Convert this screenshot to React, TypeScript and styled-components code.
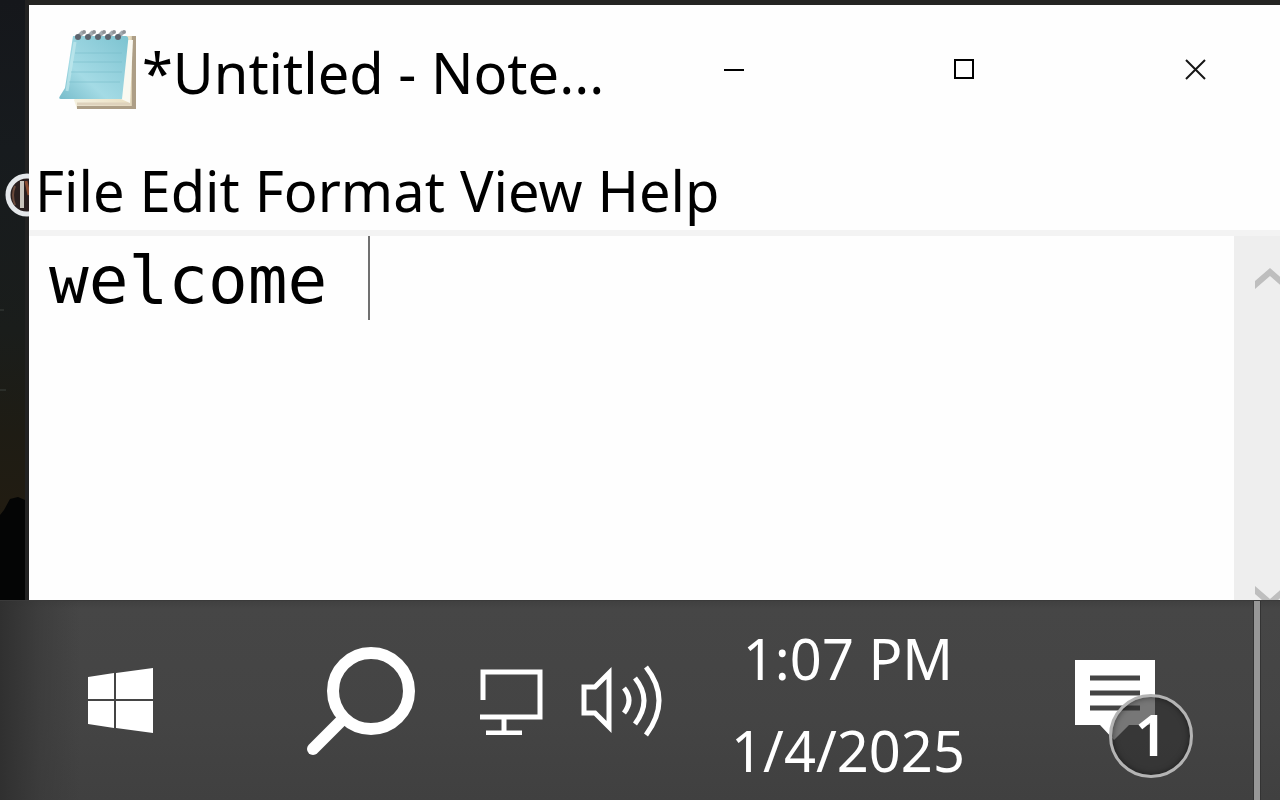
import React from 'react';
import styled, { createGlobalStyle } from 'styled-components';

const GlobalStyle = createGlobalStyle`
  *, *::before, *::after { box-sizing: border-box; }
  body {
    margin: 0;
    overflow: hidden;
    background: #1c1c1c;
    font-family: "Noto Sans", "Open Sans", sans-serif;
  }
  button {
    font: inherit;
    color: inherit;
    border: 0;
    padding: 0;
    background: none;
  }
  svg { display: block; }
`;

const Screen = styled.div`
  display: flex;
  flex-direction: column;
  height: 100vh;
  overflow: hidden;
`;

const Desktop = styled.main`
  flex: 1;
  min-height: 0;
  display: flex;
  overflow: hidden;
  padding-top: 5px;
  background: #242422;
`;

const Wallpaper = styled.div`
  flex: none;
  width: 29px;
  margin-top: -5px;
  border-right: 4px solid #222222;
  background: linear-gradient(#15171b 0%, #171b1e 25%, #1a1d1b 55%, #1e1c14 72%, #211c12 84%, #1c1810 100%);
  svg { overflow: visible; }
`;

const Window = styled.section`
  flex: 1;
  min-width: 0;
  display: flex;
  flex-direction: column;
  margin: 0 -30px -12px 0;
  background: #fefefe;
  color: #000;
  z-index: 1;
`;

const TitleBar = styled.header`
  display: flex;
  align-items: center;
  height: 130px;
  padding-left: 28px;
`;

const Title = styled.h1`
  flex: 1;
  min-width: 0;
  margin: 0;
  padding: 4px 0 0 3px;
  font-size: 56px;
  line-height: 80px;
  font-weight: 400;
  white-space: nowrap;
`;

const CaptionButton = styled.button`
  flex: none;
  display: grid;
  place-items: center;
  width: 230px;
  height: 130px;
`;

const MenuBar = styled.nav`
  display: flex;
  gap: 15px;
  height: 101px;
  padding: 14px 0 0 6px;
  border-bottom: 6px solid #f3f3f3;
`;

const MenuItem = styled.button`
  font-size: 56px;
  line-height: 80px;
`;

const Body = styled.div`
  flex: 1;
  min-height: 0;
  display: flex;
`;

const Editor = styled.div`
  position: relative;
  flex: 1;
  min-width: 0;
  display: flex;
  font: 66px/84px "DejaVu Sans Mono", monospace;
`;

const TextArea = styled.textarea`
  flex: 1;
  min-width: 0;
  border: 0;
  outline: 0;
  resize: none;
  overflow: hidden;
  padding: 3px 20px 0;
  font: inherit;
  color: #000;
  background: #fefefe;
`;

const Caret = styled.span`
  position: absolute;
  top: 0;
  left: calc(21px + 8ch);
  width: 2px;
  height: 84px;
  background: #707070;
`;

const ScrollBar = styled.div`
  flex: none;
  display: flex;
  flex-direction: column;
  justify-content: space-between;
  width: 76px;
  background: #eeeeee;
`;

const ScrollButton = styled.button<{ $end?: boolean }>`
  display: flex;
  justify-content: center;
  align-items: ${(p) => (p.$end ? 'flex-end' : 'center')};
  height: 84px;
  padding: 0 4px ${(p) => (p.$end ? 4 : 0)}px 0;
`;

const Taskbar = styled.footer`
  flex: none;
  display: flex;
  align-items: center;
  height: 200px;
  color: #fff;
  border-top: 1px solid #3a3a3a;
  background:
    linear-gradient(90deg, #303030 0, rgba(56, 56, 56, 0.6) 40px, transparent 80px),
    linear-gradient(#404040 0, #464646 8px, #444444 60%, #404040 100%);
`;

const TaskButton = styled.button<{ $width: number }>`
  flex: none;
  display: grid;
  place-items: center;
  width: ${(p) => p.$width}px;
  height: 199px;
`;

const Clock = styled.button`
  flex: 1;
  min-width: 0;
  padding-top: 6px;
  font-size: 56px;
  line-height: 92px;
  text-align: center;
  white-space: nowrap;
  span { display: block; }
`;

const Notifications = styled(TaskButton)`
  position: relative;
  padding-right: 20px;
`;

const Badge = styled.span`
  position: absolute;
  right: 61px;
  top: 93px;
  width: 84px;
  height: 84px;
  border: 3px solid #b4b4b4;
  border-radius: 50%;
  background: rgba(48, 48, 48, 0.66);
  box-shadow: inset 0 0 6px rgba(0, 0, 0, 0.5);
  font-size: 58px;
  line-height: 74px;
  font-weight: 600;
  text-align: center;
`;

const ShowDesktop = styled.button`
  flex: none;
  width: 26px;
  height: 199px;
  border-left: 6px solid #979797;
  box-shadow: -1px 0 0 #333, inset 1px 0 0 #333;
`;

const NotepadIcon = () => (
  <svg width="82" height="84" viewBox="0 0 82 84" aria-hidden="true">
    <defs>
      <linearGradient id="cover" x1="0" y1="1" x2="1" y2="0">
        <stop offset="0" stopColor="#77bccb" />
        <stop offset=".35" stopColor="#a4dbe5" />
        <stop offset=".65" stopColor="#93d0dc" />
        <stop offset="1" stopColor="#7cc3d0" />
      </linearGradient>
      <linearGradient id="edge" x1="0" y1="0" x2="1" y2="0">
        <stop offset="0" stopColor="#f5f1df" />
        <stop offset=".9" stopColor="#eadfc2" />
        <stop offset="1" stopColor="#a99a80" />
      </linearGradient>
    </defs>
    <path d="M66 8H79V81H20L17 72Z" fill="url(#edge)" />
    <path d="M20 78H75V8H79V81H20Z" fill="#ad9e86" />
    <path d="M20 76H73" stroke="#ded2bc" strokeWidth="3" />
    <path d="M70 12L64 71 73 75 76 12Z" fill="#faf9f1" />
    <path d="M16 8H69Q72 8 71 14L65 71H4Q1 71 3 68L8 60Z" fill="url(#cover)" />
    <path d="M18 14L10 63" stroke="#c9edf0" strokeWidth="3" opacity=".6" />
    <path d="M18 25H65M16 34H65M14 44H65M12 54H63" stroke="#78bdca" strokeWidth="1" opacity=".6" />
    {[0, 1, 2, 3, 4].map((i) => (
      <g key={i}>
        <path d={`M${21 + i * 10} 9L${26 + i * 10} 4`} stroke="#a3abb1" strokeWidth="4" />
        <circle cx={21 + i * 10} cy="9" r="3" fill="#5d646e" />
        <circle cx={27 + i * 10} cy="4" r="2" fill="#8f9398" />
      </g>
    ))}
  </svg>
);

const Chevron = ({ down = false }: { down?: boolean }) => (
  <svg width="32" height="22" viewBox="0 0 32 22" aria-hidden="true">
    <path d={down ? 'M1 0L16 13 31 0V8L16 21 1 8Z' : 'M1 14L16 1 31 14V22L16 9 1 22Z'} fill="#bebebe" />
  </svg>
);

export default function App() {
  return (
    <Screen>
      <GlobalStyle />
      <Desktop>
        <Wallpaper>
          <svg width="25" height="600" viewBox="0 0 25 600" aria-hidden="true">
            <circle cx="27" cy="195" r="19" fill="#2a2020" stroke="#e4e7ea" strokeWidth="5" />
            <path d="M15 186Q11 195 15 205" fill="none" stroke="#6b4a3c" strokeWidth="2" />
            <path d="M22 181V208" stroke="#c9c5bd" strokeWidth="4" />
            <path d="M26 181L29 195" stroke="#8b4d32" strokeWidth="3" />
            <path d="M0 515L4 510 10 499 18 497 25 500V600H0Z" fill="#040505" />
            <path d="M0 310H4M0 390H6" stroke="#3a403c" strokeWidth="1" />
          </svg>
        </Wallpaper>
        <Window aria-label="Notepad">
          <TitleBar>
            <NotepadIcon />
            <Title>*Untitled - Note...</Title>
            <CaptionButton aria-label="Minimize">
              <svg width="22" height="22" viewBox="0 0 22 22">
                <path d="M0 11H20" stroke="#000" strokeWidth="2" />
              </svg>
            </CaptionButton>
            <CaptionButton aria-label="Maximize">
              <svg width="22" height="22" viewBox="0 0 22 22">
                <path d="M1 1H19V19H1Z" fill="none" stroke="#000" strokeWidth="2" />
              </svg>
            </CaptionButton>
            <CaptionButton aria-label="Close">
              <svg width="22" height="22" viewBox="0 0 22 22">
                <path d="M2 1L21 20M21 1L2 20" stroke="#161616" strokeWidth="2" />
              </svg>
            </CaptionButton>
          </TitleBar>
          <MenuBar aria-label="Menu">
            {['File', 'Edit', 'Format', 'View', 'Help'].map((name) => (
              <MenuItem key={name}>{name}</MenuItem>
            ))}
          </MenuBar>
          <Body>
            <Editor>
              <TextArea aria-label="Document text" defaultValue="welcome " spellCheck={false} />
              <Caret />
            </Editor>
            <ScrollBar>
              <ScrollButton aria-label="Scroll up"><Chevron /></ScrollButton>
              <ScrollButton $end aria-label="Scroll down"><Chevron down /></ScrollButton>
            </ScrollBar>
          </Body>
        </Window>
      </Desktop>
      <Taskbar>
        <TaskButton $width={240} aria-label="Start">
          <svg width="66" height="66" viewBox="0 0 66 66">
            <path d="M1 9L27 5V31H1ZM29 5L66 0V31H29ZM1 33H27V60L1 56ZM29 33H66V65L29 60Z" fill="#fff" />
          </svg>
        </TaskButton>
        <TaskButton $width={240} aria-label="Search">
          <svg width="110" height="110" viewBox="0 0 110 110">
            <circle cx="66" cy="45" r="38" fill="none" stroke="#fff" strokeWidth="12" />
            <path d="M38 73L8 103" stroke="#fff" strokeWidth="12" strokeLinecap="round" />
          </svg>
        </TaskButton>
        <TaskButton $width={64} aria-label="Network">
          <svg width="64" height="68" viewBox="0 0 64 68">
            <path d="M3 33V5H60V50H0M24 50V65M6 66H42" fill="none" stroke="#fff" strokeWidth="5" />
          </svg>
        </TaskButton>
        <TaskButton $width={156} aria-label="Volume">
          <svg width="84" height="72" viewBox="0 0 84 72">
            <path d="M4 22V48H15L29 62V8L15 22Z" fill="none" stroke="#fff" strokeWidth="5" />
            <path d="M44 23Q54 35 44 48M55 13Q73 35 55 59M66 2Q92 35 66 70" fill="none" stroke="#fff" strokeWidth="5" />
          </svg>
        </TaskButton>
        <Clock>
          <span>1:07 PM</span>
          <span>1/4/2025</span>
        </Clock>
        <Notifications $width={258} aria-label="1 new notification">
          <svg width="82" height="84" viewBox="0 0 82 84">
            <path d="M1 1H81V66H55L40 81 26 66H1Z" fill="#fff" />
            <path d="M16 19H66M16 34H66M16 49H66" stroke="#444" strokeWidth="5" />
          </svg>
          <Badge>1</Badge>
        </Notifications>
        <ShowDesktop aria-label="Show desktop" />
      </Taskbar>
    </Screen>
  );
}
